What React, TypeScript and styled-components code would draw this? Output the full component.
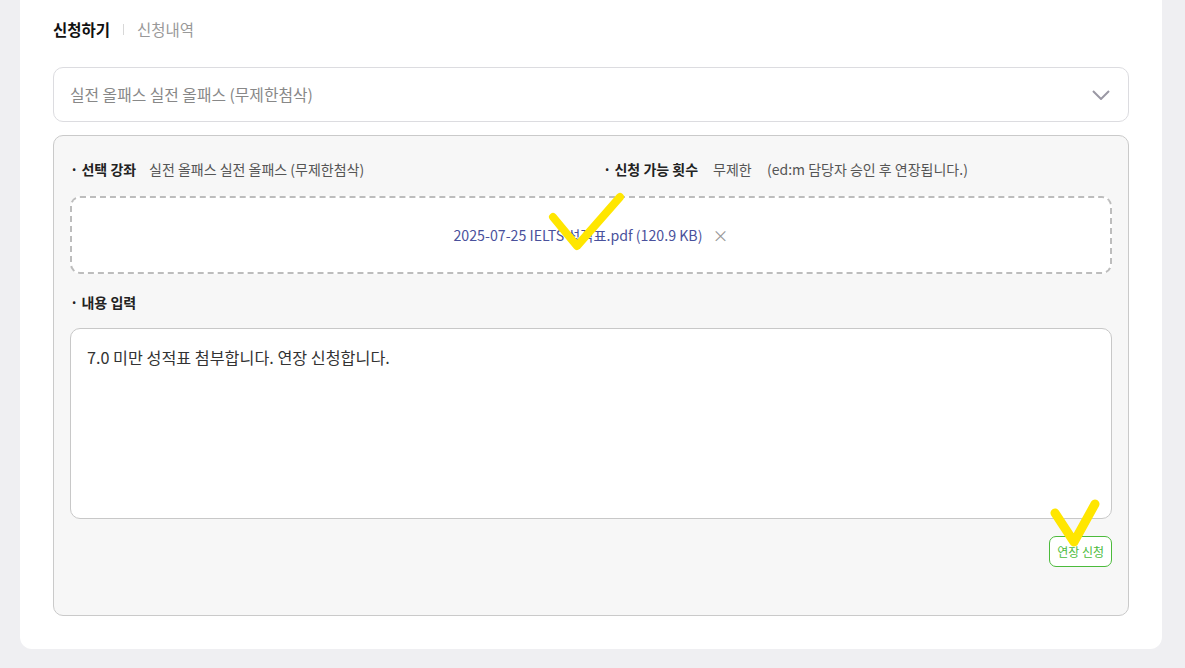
import React from "react";
import styled, { createGlobalStyle } from "styled-components";

const Global = createGlobalStyle`
  html, body { margin: 0; padding: 0; }
  body {
    background: #efeff2;
    font-family: "Noto Sans CJK KR", "Noto Sans", sans-serif;
    color: #222;
  }
  * { box-sizing: border-box; }
`;

const Page = styled.div`
  position: relative;
  padding: 0 23px 19px 20px;
`;

const Card = styled.div`
  background: #fff;
  border-radius: 0 0 12px 12px;
  padding: 18px 33px 33px 33px;
`;

const Tabs = styled.div`
  display: flex;
  align-items: center;
  height: 22px;
  gap: 13px;
  font-size: 15.5px;
`;

const Tab = styled.span<{ $active?: boolean }>`
  font-weight: ${(p) => (p.$active ? 700 : 400)};
  color: ${(p) => (p.$active ? "#111" : "#999")};
`;

const Divider = styled.span`
  width: 1px;
  height: 11px;
  background: #d8d8d8;
`;

const Select = styled.div`
  margin-top: 27px;
  height: 55px;
  border: 1px solid #dcdce0;
  border-radius: 10px;
  display: flex;
  align-items: center;
  justify-content: space-between;
  padding: 0 18px 0 16px;
  font-size: 15.8px;
  color: #888;
`;

const Panel = styled.div`
  margin-top: 13px;
  background: #f7f7f7;
  border: 1px solid #cacaca;
  border-radius: 10px;
  padding: 23px 16px 48px 16px;
  display: flex;
  flex-direction: column;
`;

const InfoRow = styled.div`
  display: grid;
  grid-template-columns: 533px 1fr;
  height: 20px;
  align-items: center;
  font-size: 14px;
`;

const Info = styled.div`
  display: flex;
  align-items: center;
  white-space: nowrap;
`;

const Label = styled.span<{ $w?: number }>`
  font-weight: 700;
  color: #222;
  width: ${(p) => (p.$w ? `${p.$w}px` : "auto")};
`;

const Value = styled.span<{ $w?: number }>`
  color: #555;
  width: ${(p) => (p.$w ? `${p.$w}px` : "auto")};
`;

const DropZone = styled.div`
  margin-top: 17px;
  height: 78px;
  background: #fff;
  border: 2px dashed #bdbdbd;
  border-radius: 10px;
  display: flex;
  align-items: center;
  justify-content: center;
  gap: 10px;
  font-size: 14.2px;
`;

const FileName = styled.span`
  color: #4a519c;
`;

const Remove = styled.span`
  color: #999;
  font-size: 16px;
  line-height: 1;
`;

const SectionLabel = styled.div`
  margin-top: 18px;
  height: 20px;
  display: flex;
  align-items: center;
  font-size: 14px;
  font-weight: 700;
  color: #222;
`;

const TextBox = styled.div`
  margin-top: 16px;
  height: 191px;
  background: #fff;
  border: 1px solid #c8c8c8;
  border-radius: 10px;
  padding: 16px 16px;
  font-size: 16.2px;
  color: #333;
  line-height: 24px;
`;

const Actions = styled.div`
  margin-top: 17px;
  display: flex;
  justify-content: flex-end;
`;

const GreenButton = styled.button`
  height: 31px;
  padding: 0 7px;
  background: #fff;
  border: 1px solid #4cbb3c;
  border-radius: 7px;
  color: #4cbb3c;
  font-family: "Noto Sans CJK KR", sans-serif;
  font-size: 12px;
`;

const Mark = styled.svg`
  position: absolute;
  pointer-events: none;
`;

function Chevron() {
  return (
    <svg width="18" height="10" viewBox="0 0 18 10">
      <path d="M1 1 L9 9 L17 1" fill="none" stroke="#9a98a4" strokeWidth="2" />
    </svg>
  );
}

export default function App() {
  return (
    <>
      <Global />
      <Page>
        <Card>
          <Tabs>
            <Tab $active>신청하기</Tab>
            <Divider />
            <Tab>신청내역</Tab>
          </Tabs>
          <Select>
            <span>실전 올패스 실전 올패스 (무제한첨삭)</span>
            <Chevron />
          </Select>
          <Panel>
            <InfoRow>
              <Info>
                <Label $w={79}>· 선택 강좌</Label>
                <Value>실전 올패스 실전 올패스 (무제한첨삭)</Value>
              </Info>
              <Info>
                <Label $w={110}>· 신청 가능 횟수</Label>
                <Value $w={54}>무제한</Value>
                <Value>(ed:m 담당자 승인 후 연장됩니다.)</Value>
              </Info>
            </InfoRow>
            <DropZone>
              <FileName>2025-07-25 IELTS 성적표.pdf (120.9 KB)</FileName>
              <Remove>×</Remove>
            </DropZone>
            <SectionLabel>· 내용 입력</SectionLabel>
            <TextBox>7.0 미만 성적표 첨부합니다. 연장 신청합니다.</TextBox>
            <Actions>
              <GreenButton>연장 신청</GreenButton>
            </Actions>
          </Panel>
        </Card>
        <Mark width="80" height="70" viewBox="0 0 80 70" style={{ left: 545, top: 188 }}>
          <path d="M8 29 L32 58 L75 9" fill="none" stroke="#ffe600" strokeWidth="8" strokeLinecap="round" strokeLinejoin="round" />
        </Mark>
        <Mark width="60" height="60" viewBox="0 0 60 60" style={{ left: 1045, top: 495 }}>
          <path d="M10 18 L29 47 L50 9" fill="none" stroke="#ffe600" strokeWidth="9" strokeLinecap="round" strokeLinejoin="round" />
        </Mark>
      </Page>
    </>
  );
}
